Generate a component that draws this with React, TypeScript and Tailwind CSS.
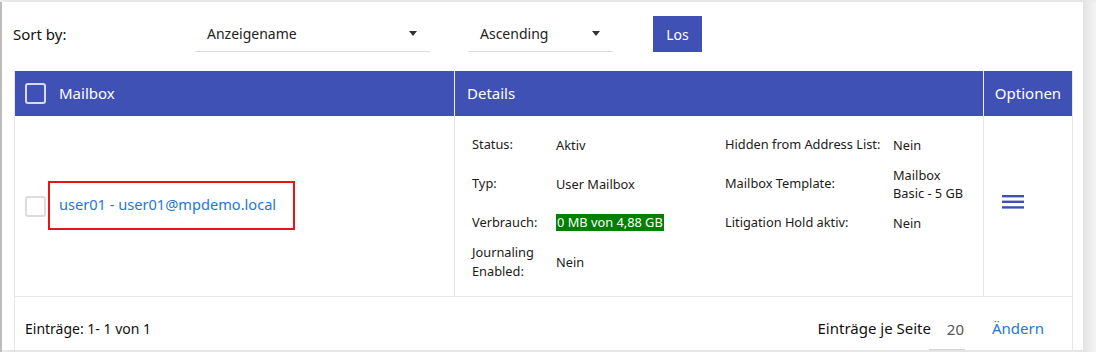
import React from 'react';

const font = { fontFamily: '"Segoe UI", "Noto Sans", sans-serif' };

function Caret() {
  return (
    <svg width="8" height="5" viewBox="0 0 8 5" className="shrink-0">
      <path d="M0 0 L8 0 L4 5 Z" fill="#333" />
    </svg>
  );
}

function Select({ label, width }: { label: string; width: string }) {
  return (
    <div className={`${width} h-[36px] flex items-center justify-between pl-[12px] pr-[13px] border-b border-[#dcdcdc] mt-[14px]`}>
      <span className="text-[14px] text-[#222]">{label}</span>
      <Caret />
    </div>
  );
}

function Row({ label, value, h = 'h-[39px]' }: { label: React.ReactNode; value: React.ReactNode; h?: string }) {
  return (
    <>
      <div className={`${h} flex items-center leading-[19px]`}>{label}</div>
      <div className={`${h} flex items-center leading-[18px]`}>{value}</div>
    </>
  );
}

export default function App() {
  return (
    <div className="w-[1096px] h-[352px] bg-[#ececec] overflow-hidden" style={font}>
      <div className="flex h-full pt-[2px]">
        <div className="w-[2px] h-full bg-[#bdbdbd] shrink-0" />
        <div className="w-[1081px] h-[348px] bg-white shrink-0 pl-[11px] pr-[11px] shadow-[3px_0_6px_rgba(0,0,0,0.08)]">
          {/* toolbar */}
          <div className="h-[69px] flex items-start">
            <div className="w-[182px] h-[64px] flex items-center text-[15px] text-[#111]">Sort by:</div>
            <Select label="Anzeigename" width="w-[235px]" />
            <div className="w-[38px]" />
            <Select label="Ascending" width="w-[145px]" />
            <div className="w-[40px]" />
            <button className="mt-[14px] w-[49px] h-[36px] bg-[#3f51b5] text-white text-[14px]">Los</button>
          </div>

          {/* table */}
          <div className="w-[1059px] border-l border-r border-[#e6e6e6] ml-px">
            <div className="flex h-[45px] bg-[#3f51b5] text-white text-[15px]">
              <div className="w-[440px] flex items-center pl-[10px] border-r border-white/90">
                <div className="w-[21px] h-[21px] rounded-[3px] border-2 border-[#d8dbef]" />
                <span className="ml-[13px]">Mailbox</span>
              </div>
              <div className="w-[529px] flex items-center pl-[12px] border-r border-white/90">Details</div>
              <div className="flex-1 flex items-center justify-center">Optionen</div>
            </div>

            <div className="flex h-[181px] border-b border-[#e6e6e6]">
              <div className="w-[440px] flex items-center pl-[10px] border-r border-[#e6e6e6]">
                <div className="w-[21px] h-[21px] rounded-[3px] border-2 border-[#dcdcdc] mt-[1px]" />
                <div className="ml-[2px] w-[247px] h-[49px] border-2 border-[#e8141c] flex items-center pl-[9px] text-[14.6px] text-[#1d78d6] mt-[-2px]">
                  user01 - user01@mpdemo.local
                </div>
              </div>
              <div className="w-[529px] border-r border-[#e6e6e6] pl-[17px] pt-[9px] text-[12.8px] text-[#1b1b1b]">
                <div className="grid grid-cols-[84px_169px_168px_1fr]">
                  <Row label="Status:" value="Aktiv" />
                  <Row label="Hidden from Address List:" value="Nein" />
                  <Row label="Typ:" value="User Mailbox" />
                  <Row label="Mailbox Template:" value={<span>Mailbox<br />Basic - 5 GB</span>} />
                  <Row label="Verbrauch:" value={<span className="bg-[#008000] text-white px-px leading-[17px]">0 MB von 4,88 GB</span>} />
                  <Row label="Litigation Hold aktiv:" value="Nein" />
                  <Row label={<span>Journaling<br />Enabled:</span>} value="Nein" />
                  <div />
                  <div />
                </div>
              </div>
              <div className="flex-1 flex items-center pl-[18px] pb-[8px]">
                <svg width="22" height="14" viewBox="0 0 22 14">
                  <rect x="0" y="0" width="22" height="2.4" fill="#3f51b5" />
                  <rect x="0" y="5.6" width="22" height="2.4" fill="#3f51b5" />
                  <rect x="0" y="11.2" width="22" height="2.4" fill="#3f51b5" />
                </svg>
              </div>
            </div>

            <div className="h-[53px] flex items-center pl-[10px] pr-[28px] pt-[10px] text-[14px] text-[#111]">
              <span>Einträge: 1- 1 von 1</span>
              <div className="flex-1" />
              <span className="text-[15px]">Einträge je Seite</span>
              <div className="ml-[-2px] w-[36px] h-[43px] flex items-center justify-end pr-[1px] border-b border-[#d6d6d6] text-[15px] text-[#555] pt-[2px]">20</div>
              <span className="ml-[27px] text-[15px] text-[#1d78d6]">Ändern</span>
            </div>
          </div>
        </div>
        <div className="flex-1 h-full bg-gradient-to-r from-[#e4e4e4] to-[#f4f4f4]" />
      </div>
    </div>
  );
}
